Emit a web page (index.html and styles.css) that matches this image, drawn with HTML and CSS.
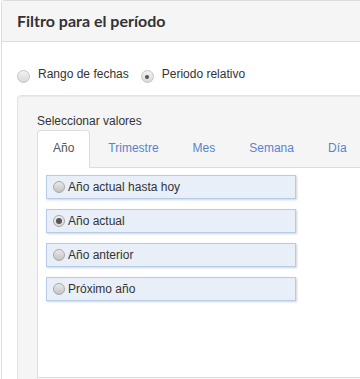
FILE: index.html
```html
<!DOCTYPE html>
<html lang="es">
<head>
<meta charset="utf-8">
<title>Filtro para el período</title>
<link rel="stylesheet" href="styles.css">
</head>
<body>
<div class="panel">
  <div class="panel-heading">Filtro para el período</div>
  <div class="panel-body">
    <div class="mode-row">
      <label class="mode"><span class="radio"></span>Rango de fechas</label>
      <label class="mode"><span class="radio checked"></span>Periodo relativo</label>
    </div>
    <div class="well">
      <div class="well-label">Seleccionar valores</div>
      <ul class="tabs">
        <li class="tab active">Año</li>
        <li class="tab">Trimestre</li>
        <li class="tab">Mes</li>
        <li class="tab">Semana</li>
        <li class="tab">Día</li>
      </ul>
      <div class="tab-content">
        <div class="option"><span class="opt-radio"></span>Año actual hasta hoy</div>
        <div class="option"><span class="opt-radio checked"></span>Año actual</div>
        <div class="option"><span class="opt-radio"></span>Año anterior</div>
        <div class="option"><span class="opt-radio"></span>Próximo año</div>
      </div>
    </div>
  </div>
</div>
</body>
</html>
```

FILE: styles.css
```css
html {
  overflow: hidden;
}

body {
  margin: 0;
  background: #fff;
  font-family: "Liberation Sans", Arial, sans-serif;
  font-size: 12px;
  line-height: 17px;
  color: #333;
}

.panel {
  margin-left: 1px;
  width: 440px;
  border: 1px solid #dddddd;
  border-radius: 3px;
  background: #fff;
}

.panel-heading {
  padding: 10px 15px;
  background: #f5f5f5;
  border-bottom: 1px solid #dddddd;
  font-family: Lato, "Open Sans", sans-serif;
  font-weight: bold;
  font-size: 16px;
  line-height: 20px;
  color: #333;
}

.panel-body {
  padding: 24px 15px 20px;
}

.mode-row {
  display: flex;
  gap: 12px;
  margin-bottom: 12px;
}

.mode {
  display: flex;
  align-items: center;
}

.radio {
  width: 11px;
  height: 11px;
  margin: 4px 8px 0 0;
  border: 1px solid #c4c4c4;
  border-radius: 50%;
  background: linear-gradient(#f2f2f2, #d9d9d9);
  display: flex;
  align-items: center;
  justify-content: center;
  box-sizing: content-box;
}

.radio.checked::after {
  content: "";
  width: 4px;
  height: 4px;
  border-radius: 50%;
  background: #555;
}

.well {
  width: 400px;
  padding: 17px 19px 19px;
  background: #f5f5f5;
  border: 1px solid #e3e3e3;
  border-radius: 4px;
  box-shadow: inset 0 1px 1px rgba(0, 0, 0, 0.05);
}

.well-label {
  color: #333;
}

.tabs {
  display: flex;
  gap: 2px;
  list-style: none;
  margin: 0;
  padding: 0;
  border-bottom: 1px solid #dddddd;
}

.tab {
  padding: 9px 15px 10px;
  border: 1px solid transparent;
  border-radius: 4px 4px 0 0;
  margin-bottom: -1px;
  color: #5b83c9;
}

.tab.active {
  color: #555;
  background: #fff;
  border-color: #dddddd;
  border-bottom-color: #fff;
}

.tab-content {
  box-sizing: border-box;
  height: 210px;
  padding: 7px 8px;
  background: #fff;
  border: 1px solid #dddddd;
  border-top: none;
}

.option {
  display: flex;
  align-items: center;
  width: 248px;
  height: 22px;
  margin-bottom: 10px;
  padding: 0 6px;
  box-sizing: content-box;
  position: relative;
  left: 0;
  margin-left: 0;
  background: #e8eff9;
  border: 1px solid #b4cce9;
  box-shadow: 1px 1px 2px rgba(0, 0, 0, 0.18);
  color: #333;
}

.option {
  width: 236px;
}

.opt-radio {
  width: 10px;
  height: 10px;
  margin-right: 3px;
  border: 1px solid #a8a8a8;
  border-radius: 50%;
  background: linear-gradient(#e9e9e9, #c3c3c3);
  display: flex;
  align-items: center;
  justify-content: center;
}

.opt-radio.checked {
  background: linear-gradient(#f0f0f0, #d8d8d8);
}

.opt-radio.checked::after {
  content: "";
  width: 6px;
  height: 6px;
  border-radius: 50%;
  background: #555;
}
```
